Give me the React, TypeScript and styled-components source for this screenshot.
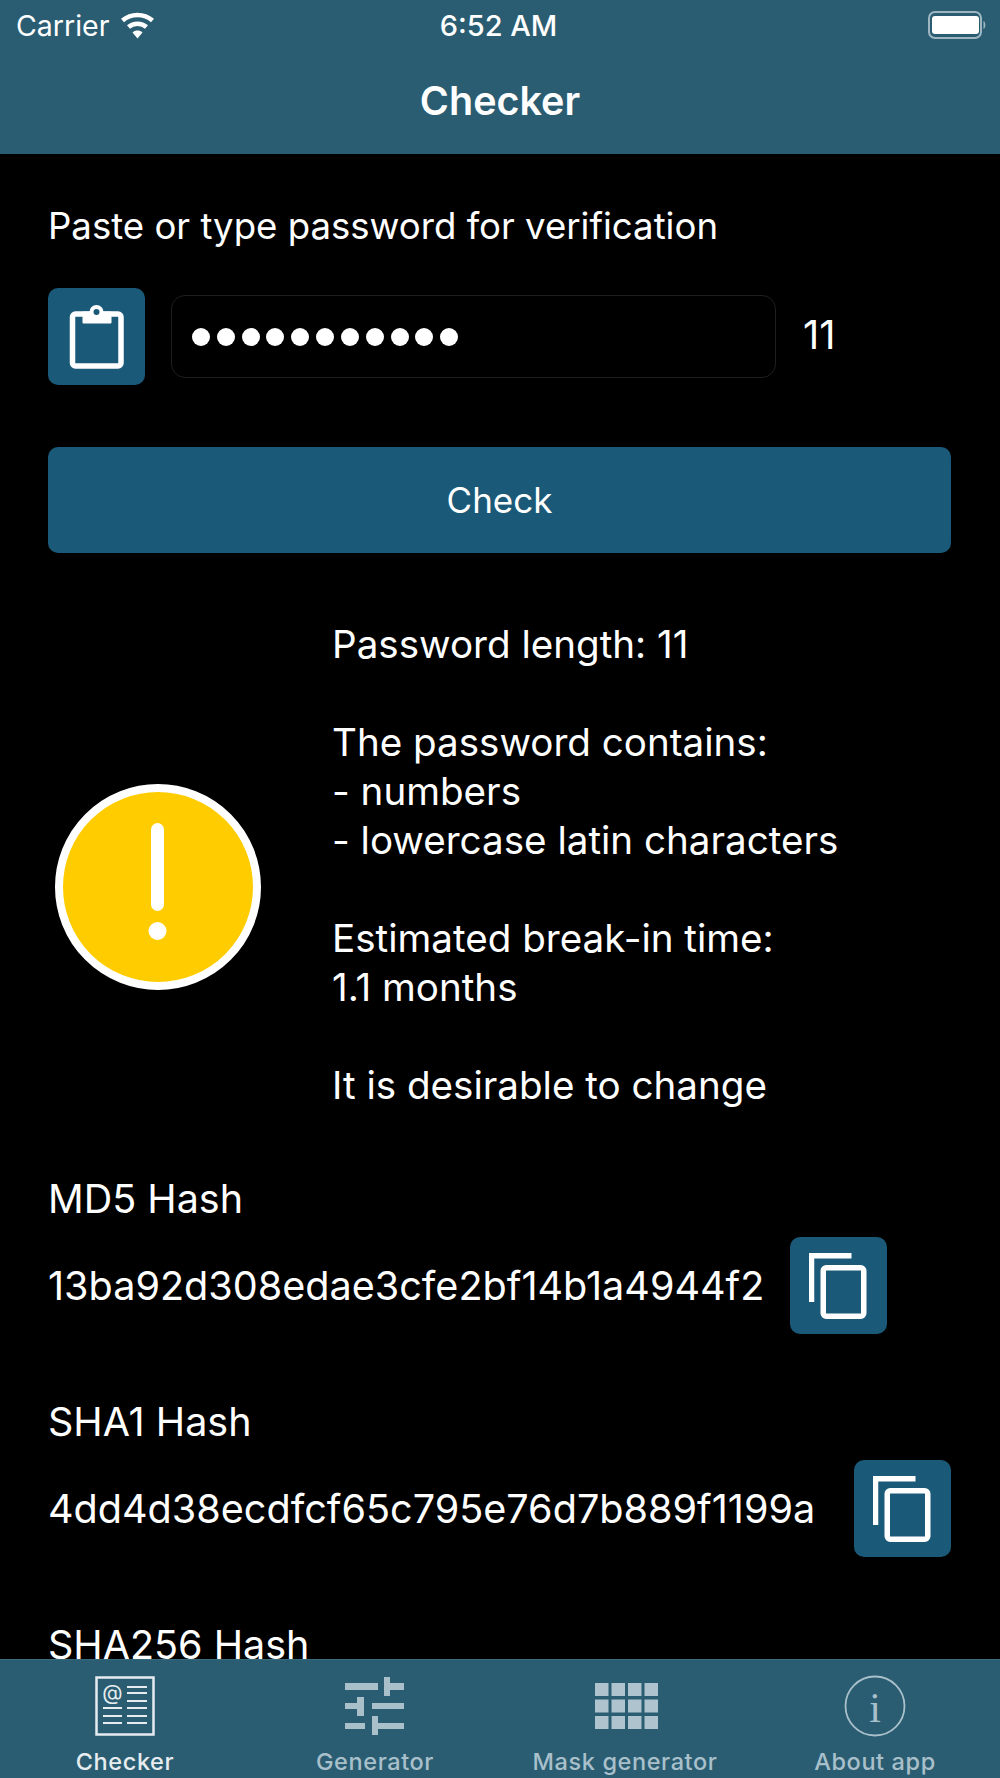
import React from 'react';
import styled, { createGlobalStyle } from 'styled-components';

const Global = createGlobalStyle`
  html, body { margin: 0; padding: 0; background: #000; }
  body { font-family: Inter, "Liberation Sans", sans-serif; color: #fff; }
`;
const Screen = styled.div`
  width: 1000px; height: 1778px; display: flex; flex-direction: column; overflow: hidden; background: #000;
`;
const Header = styled.header`
  height: 154px; flex: none; background: #2a5d72; display: flex; flex-direction: column;
`;
const StatusBar = styled.div`
  height: 50px; padding: 0 13px 0 16px; display: grid; grid-template-columns: 1fr auto 1fr; align-items: center; font-size: 28.5px;
`;
const Carrier = styled.div`display: flex; align-items: center; gap: 11px;`;
const Clock = styled.div`font-weight: 500; font-size: 29px; margin-right: 6px;`;
const BatteryWrap = styled.div`display: flex; justify-content: flex-end;`;
const Title = styled.h1`
  margin: 0; flex: 1; display: flex; align-items: center; justify-content: center; font-size: 39.5px; font-weight: 600; padding-bottom: 3px;
`;
const Main = styled.main`
  flex: 1; min-height: 0; overflow: hidden; padding: 0 49px 0 48px;
`;
const PromptLabel = styled.div`
  font-size: 36.6px; line-height: 49px; height: 49px; margin-top: 48px;
`;
const InputRow = styled.div`
  margin-top: 37px; display: flex; align-items: center;
`;
const IconButton = styled.button`
  width: 97px; height: 97px; flex: none; padding: 0; border: 0; border-radius: 10px; background: #1a5a78; display: flex; align-items: center; justify-content: center;
`;
const Field = styled.div`
  margin-left: 26px; width: 605px; height: 83px; box-sizing: border-box; border: 1px solid #1f1f1f; border-radius: 14px; display: flex; align-items: center; padding-left: 20px; gap: 6.83px;
`;
const Dot = styled.span`width: 18px; height: 18px; border-radius: 50%; background: #fff; display: block;`;
const Count = styled.div`margin-left: 27px; font-size: 40px; line-height: 49px; padding-bottom: 4px;`;
const CheckButton = styled.button`
  margin-top: 62px; width: 100%; height: 106px; border: 0; border-radius: 10px; background: #1a5a78; color: #fff; font: inherit; font-size: 35px; padding: 0;
`;
const Result = styled.section`
  margin-top: 67px; display: flex; align-items: flex-start;
`;
const AlertIcon = styled.div`width: 284px; flex: none; display: flex; padding: 164px 0 0 7px; box-sizing: border-box;`;
const ResultText = styled.div`font-size: 38.6px; line-height: 49px; white-space: pre-line;`;
const HashBlock = styled.section`margin-top: 65px;`;
const HashLabel = styled.div`font-size: 39.5px; line-height: 49px; height: 49px;`;
const HashRow = styled.div`
  display: flex; align-items: center; margin-top: 13px; margin-bottom: 64px;
`;
const HashText = styled.div`font-size: 39.6px; white-space: nowrap;`;
const CopyButton = styled(IconButton)<{ $gap: number }>`margin-left: ${p => p.$gap}px;`;
const TabBar = styled.nav`
  height: 119px; flex: none; background: #2a5d72; border-top: 1px solid #3a6c80; box-sizing: border-box; display: grid; grid-template-columns: repeat(4, 250px);
`;
const Tab = styled.div<{ $active?: boolean }>`
  display: flex; flex-direction: column; align-items: center; padding-top: 16px; box-sizing: border-box;
  color: ${p => (p.$active ? '#e6ecef' : '#a9c0cb')};
`;
const TabIcon = styled.div<{ $shift?: number }>`
  height: 60px; display: flex; align-items: center; justify-content: center; margin-left: ${p => p.$shift ?? 0}px;
`;
const TabLabel = styled.div`font-size: 23.5px; font-weight: 500; margin-top: 11px; letter-spacing: 0.6px; white-space: nowrap;`;

const Wifi = () => (
  <svg width="35" height="28" viewBox="0 0 35 28" fill="none" stroke="#fff" strokeWidth="4.5">
    <path d="M2.5 9.5C11 2 24 2 32.5 9.5" />
    <path d="M8.5 16C13.5 11.5 21.5 11.5 26.5 16" />
    <path d="M12.5 21.5l5 6 5-6c-3-2.6-7-2.6-10 0z" fill="#fff" stroke="none" />
  </svg>
);
const Battery = () => (
  <svg width="59" height="28" viewBox="0 0 59 28">
    <rect x="1" y="1" width="52" height="26" rx="6" fill="none" stroke="#9db6c2" strokeWidth="2" />
    <rect x="4" y="5" width="47" height="18" rx="3" fill="#fff" />
    <path d="M55.5 10c2.5 1 2.5 7 0 8z" fill="#9db6c2" />
  </svg>
);
const Clipboard = () => (
  <svg width="56" height="66" viewBox="0 0 56 66" fill="none" stroke="#fff" strokeWidth="5.5" strokeLinejoin="round">
    <rect x="3.5" y="10" width="48.5" height="52" rx="3" />
    <path d="M14.5 8.5h27v10h-27z" fill="#fff" strokeWidth="2" />
    <circle cx="27.5" cy="8" r="5" fill="#1a5a78" strokeWidth="4" />
  </svg>
);
const Copy = () => (
  <svg width="60" height="68" viewBox="0 0 60 68" fill="none" stroke="#fff" strokeWidth="5.5">
    <path d="M2.5 50V3.75H42.5" />
    <rect x="14.25" y="15.75" width="40.5" height="48.5" rx="3" />
  </svg>
);
const Warning = () => (
  <svg width="206" height="206" viewBox="0 0 206 206">
    <circle cx="103" cy="103" r="99" fill="#ffcc00" stroke="#fff" strokeWidth="8" />
    <rect x="96" y="39" width="13" height="88" rx="6.5" fill="#fff" />
    <circle cx="102.5" cy="147" r="9" fill="#fff" />
  </svg>
);
const NewsIcon = () => (
  <svg width="60" height="60" viewBox="0 0 60 60" fill="none" stroke="#e6ecef" strokeWidth="2">
    <rect x="1.5" y="1.5" width="57" height="57" strokeWidth="2.5" />
    <text x="17.5" y="24" fontSize="21" fill="#e6ecef" stroke="none" textAnchor="middle" fontFamily="Inter, sans-serif">@</text>
    <path d="M32 11h20M32 17h20M32 25h20M32 32h20M32 40h20M32 47h20M8 32h19M8 40h19M8 47h19" />
  </svg>
);
const Sliders = () => (
  <svg width="60" height="60" viewBox="0 0 60 60" fill="#a9c0cb">
    <path d="M0 7h33v7H0zM39 1h6v6h14v7H45v6h-6zM0 27h12v-6h7v19h-7v-7H0zM27 27h32v6H27zM0 47h20v6H0zM27 40h6v7h26v6H33v6h-6z" />
  </svg>
);
const Grid = () => (
  <svg width="64" height="46" viewBox="0 0 64 46" fill="#aec3cd">
    {[0, 16.5, 33].map(y => [0, 16.5, 33, 49.5].map(x => <rect key={`${x}-${y}`} x={x} y={y} width="13.5" height="13" />))}
  </svg>
);
const Info = () => (
  <svg width="62" height="62" viewBox="0 0 62 62" fill="none">
    <circle cx="31" cy="31" r="29.5" stroke="#a9c0cb" strokeWidth="1.8" />
    <text x="31" y="47" fontSize="42" fill="#a9c0cb" textAnchor="middle" fontFamily="Liberation Serif, serif">i</text>
  </svg>
);

export default function App() {
  return (
    <Screen>
      <Global />
      <Header>
        <StatusBar>
          <Carrier>Carrier <Wifi /></Carrier>
          <Clock>6:52 AM</Clock>
          <BatteryWrap><Battery /></BatteryWrap>
        </StatusBar>
        <Title>Checker</Title>
      </Header>
      <Main>
        <PromptLabel>Paste or type password for verification</PromptLabel>
        <InputRow>
          <IconButton aria-label="Paste"><Clipboard /></IconButton>
          <Field>{Array.from({ length: 11 }, (_, i) => <Dot key={i} />)}</Field>
          <Count>11</Count>
        </InputRow>
        <CheckButton>Check</CheckButton>
        <Result>
          <AlertIcon><Warning /></AlertIcon>
          <ResultText>{`Password length: 11

The password contains:
- numbers
- lowercase latin characters

Estimated break-in time:
1.1 months

It is desirable to change`}</ResultText>
        </Result>
        <HashBlock>
          <HashLabel>MD5 Hash</HashLabel>
          <HashRow>
            <HashText>13ba92d308edae3cfe2bf14b1a4944f2</HashText>
            <CopyButton $gap={26} aria-label="Copy MD5"><Copy /></CopyButton>
          </HashRow>
          <HashLabel>SHA1 Hash</HashLabel>
          <HashRow>
            <HashText>4dd4d38ecdfcf65c795e76d7b889f1199a</HashText>
            <CopyButton $gap={39} aria-label="Copy SHA1"><Copy /></CopyButton>
          </HashRow>
          <HashLabel>SHA256 Hash</HashLabel>
        </HashBlock>
      </Main>
      <TabBar>
        <Tab $active><TabIcon><NewsIcon /></TabIcon><TabLabel>Checker</TabLabel></Tab>
        <Tab><TabIcon><Sliders /></TabIcon><TabLabel>Generator</TabLabel></Tab>
        <Tab><TabIcon $shift={3}><Grid /></TabIcon><TabLabel>Mask generator</TabLabel></Tab>
        <Tab><TabIcon><Info /></TabIcon><TabLabel>About app</TabLabel></Tab>
      </TabBar>
    </Screen>
  );
}
